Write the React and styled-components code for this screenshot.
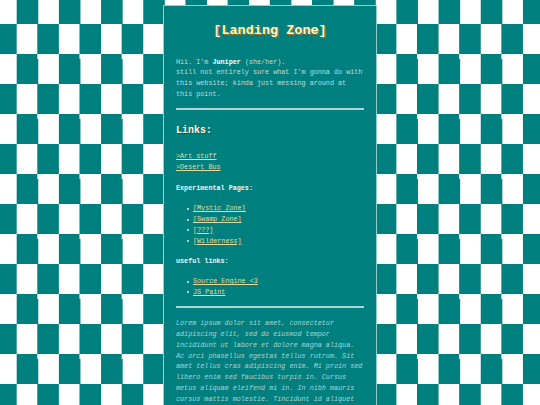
import React from 'react';
import styled, { createGlobalStyle } from 'styled-components';

const GlobalStyle = createGlobalStyle`
  html, body {
    margin: 0;
    padding: 0;
  }
  body {
    min-height: 405px;
    background-color: #ffffff;
    background-image: conic-gradient(#007f7f 25%, #ffffff 0 50%, #007f7f 0 75%, #ffffff 0);
    background-size: 42.2px 60px;
    background-position: 16.7px 24px;
    font-family: "Liberation Mono", "Courier New", monospace;
  }
`;

const Panel = styled.main`
  width: 188px;
  margin: 5px auto 0;
  padding: 17px 12px 40px;
  background: #007f7f;
  border: 1px solid #8fd0d0;
  border-bottom: none;
  color: #c0dede;
  font-size: 6.75px;
  line-height: 10.75px;
`;

const Title = styled.h1`
  margin: 0;
  font-size: 13.5px;
  line-height: 15px;
  font-weight: bold;
  text-align: center;
  color: #ffffc4;
  text-shadow: 1px 1px 0 #a86d24;
`;

const Text = styled.p`
  margin: ${p => p.$top ?? 10}px 0 0;
  font-style: ${p => (p.$italic ? 'italic' : 'normal')};
  color: ${p => (p.$italic ? '#acd4d4' : '#c0dede')};
`;

const Name = styled.b`
  color: #ffffff;
`;

const Rule = styled.hr`
  margin: ${p => p.$top ?? 10}px 0 0;
  border: none;
  border-top: 2px solid #aad8d8;
  height: 0;
`;

const Heading = styled.h2`
  margin: 14.5px 0 0;
  font-size: 10px;
  line-height: 12px;
  font-weight: bold;
  color: #fffde4;
  text-shadow: 1px 1px 0 #1e4d4d;
`;

const Label = styled.p`
  margin: 10px 0 0;
  font-weight: bold;
  color: #f2f6f2;
`;

const Link = styled.a`
  color: #e4dc9a;
  text-decoration: underline;
  text-underline-offset: 1px;
`;

const LinkBlock = styled.div`
  margin-top: 14.5px;
  display: flex;
  flex-direction: column;
  align-items: flex-start;
`;

const List = styled.ul`
  margin: ${p => p.$top ?? 10}px 0 0;
  padding: 0 0 0 17px;
  list-style: none;
`;

const Item = styled.li`
  position: relative;
  line-height: 10.8px;

  &::before {
    content: '';
    position: absolute;
    left: -6px;
    top: 4.5px;
    width: 2px;
    height: 2px;
    border-radius: 50%;
    background: #d8ecec;
  }
`;

const experimental = ['[Mystic Zone]', '[Swamp Zone]', '[???]', '[Wilderness]'];
const useful = ['Source Engine <3', 'JS Paint'];

const lorem =
  'Lorem ipsum dolor sit amet, consectetur adipiscing elit, sed do eiusmod tempor incididunt ut labore et dolore magna aliqua. Ac orci phasellus egestas tellus rutrum. Sit amet tellus cras adipiscing enim. Mi proin sed libero enim sed faucibus turpis in. Cursus metus aliquam eleifend mi in. In nibh mauris cursus mattis molestie. Tincidunt id aliquet risus feugiat in ante metus dictum at tempor commodo.';

const App = () => (
  <>
    <GlobalStyle />
    <Panel>
      <Title>[Landing Zone]</Title>
      <Text $top={18.5}>
        Hii. I'm <Name>Juniper</Name> (she/her).
        <br />
        still not entirely sure what I'm gonna do with this website; kinda just messing around at this point.
      </Text>
      <Rule $top={8.5} />
      <Heading>Links:</Heading>
      <LinkBlock>
        <Link href="#">&gt;Art stuff</Link>
        <Link href="#">&gt;Desert Bus</Link>
      </LinkBlock>
      <Label>Experimental Pages:</Label>
      <List>
        {experimental.map(name => (
          <Item key={name}>
            <Link href="#">{name}</Link>
          </Item>
        ))}
      </List>
      <Label>useful links:</Label>
      <List $top={9}>
        {useful.map(name => (
          <Item key={name}>
            <Link href="#">{name}</Link>
          </Item>
        ))}
      </List>
      <Rule $top={8} />
      <Text $italic $top={10.5}>{lorem}</Text>
    </Panel>
  </>
);

export default App;
